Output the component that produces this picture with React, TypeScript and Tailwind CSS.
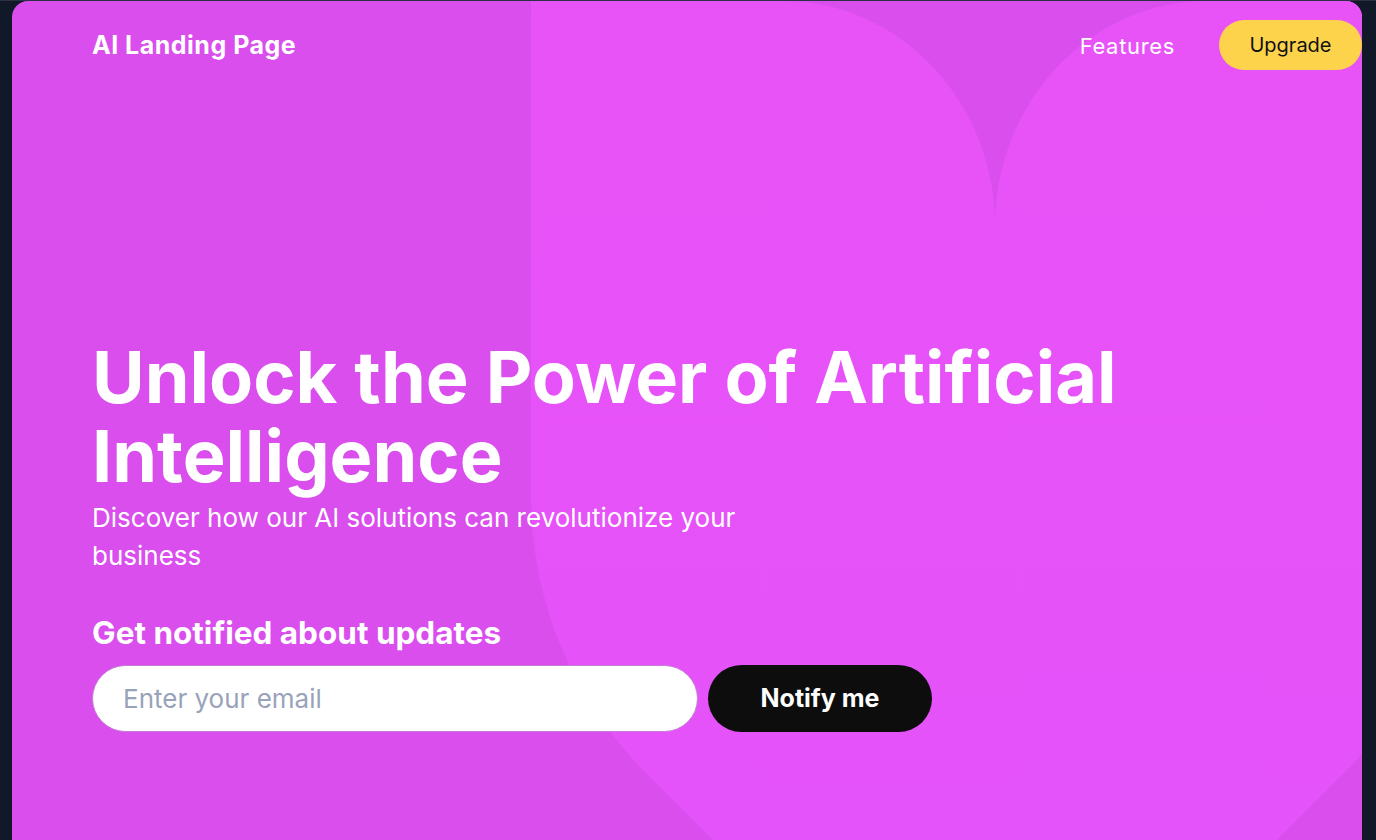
import React from "react"

const font = { fontFamily: "Inter, 'Noto Sans', 'Liberation Sans', sans-serif" }

function HeartShape() {
  return (
    <svg
      className="pointer-events-none absolute left-0 top-0"
      width="1350"
      height="900"
      viewBox="0 0 1350 900"
      aria-hidden="true"
    >
      <defs>
        <linearGradient id="lobe" x1="0" y1="0" x2="0" y2="1">
          <stop offset="0" stopColor="#e853f7" />
          <stop offset="1" stopColor="#e352fa" />
        </linearGradient>
      </defs>
      <path
        d="M519 0 H771 A212 225 0 0 1 983 225 A212 225 0 0 1 1195 0 H1447 V495 A390 390 0 0 1 1333 771 L983 1121 L633 771 A390 390 0 0 1 519 495 Z"
        fill="url(#lobe)"
      />
    </svg>
  )
}

export default function App() {
  return (
    <div className="relative h-screen overflow-hidden border-t border-[#2b3042] bg-[#111827] pl-3 pr-[14px]" style={font}>
      <div className="absolute left-[271px] top-[-1px] h-px w-[60px] bg-[#ff1a1a]" />

      <div className="relative h-[900px] overflow-hidden rounded-t-2xl bg-[#d94eed]">
        <HeartShape />

        <header className="relative flex items-center justify-between pl-20 pt-[19px]">
          <span className="pt-[2px] text-[25px] font-bold tracking-[0.02em] text-white">AI Landing Page</span>
          <nav className="flex items-center gap-11">
            <a className="pt-[2px] text-[22px] tracking-[0.03em] text-white">Features</a>
            <button className="h-[50px] w-[143px] rounded-full bg-[#fdd34c] text-[20px] text-[#111]">
              Upgrade
            </button>
          </nav>
        </header>

        <main className="relative pl-20 pt-[267px]">
          <h1 className="text-[72px] font-bold leading-[1.1] text-white">
            Unlock the Power of Artificial
            <br />
            Intelligence
          </h1>
          <p className="mt-[4px] max-w-[740px] text-[26px] leading-[1.45] text-white">
            Discover how our AI solutions can revolutionize your business
          </p>

          <h2 className="mt-[37px] text-[31.5px] font-bold leading-[1.35] text-white">Get notified about updates</h2>
          <form className="mt-[11px] flex items-center gap-[10px]" onSubmit={(e) => e.preventDefault()}>
            <input
              type="email"
              placeholder="Enter your email"
              className="h-[67px] w-[606px] rounded-full border border-[#c57ad6] bg-white px-[30px] text-[26px] text-gray-800 outline-none placeholder:text-[#98a3ba]"
            />
            <button className="h-[67px] w-[224px] rounded-full bg-[#0d0d0d] text-[25px] font-bold text-white">
              Notify me
            </button>
          </form>
        </main>
      </div>
    </div>
  )
}
